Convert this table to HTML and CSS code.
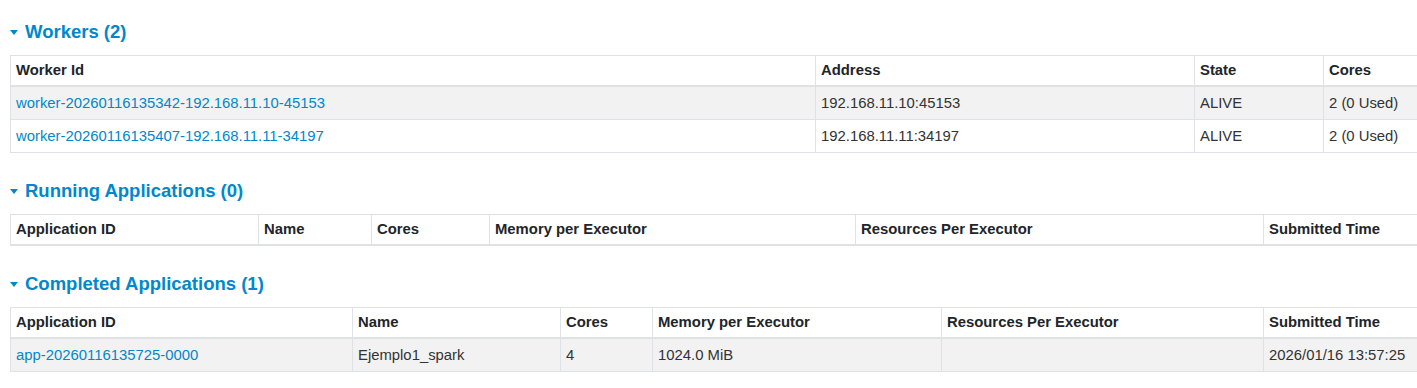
FILE: index.html
```html
<!DOCTYPE html>
<html lang="en">
<head>
  <meta charset="utf-8">
  <title>Spark Master</title>
  <link rel="stylesheet" href="styles.css">
</head>
<body>
  <div class="page">
    <section class="block">
      <h4 class="block__title"><span class="arrow-open"></span>Workers (2)</h4>
      <table class="data-table">
        <colgroup>
          <col style="width: 805px"><col style="width: 379px"><col style="width: 129px"><col>
        </colgroup>
        <thead>
          <tr><th>Worker Id</th><th>Address</th><th>State</th><th>Cores</th></tr>
        </thead>
        <tbody>
          <tr>
            <td><a href="#">worker-20260116135342-192.168.11.10-45153</a></td>
            <td>192.168.11.10:45153</td>
            <td>ALIVE</td>
            <td>2 (0 Used)</td>
          </tr>
          <tr>
            <td><a href="#">worker-20260116135407-192.168.11.11-34197</a></td>
            <td>192.168.11.11:34197</td>
            <td>ALIVE</td>
            <td>2 (0 Used)</td>
          </tr>
        </tbody>
      </table>
    </section>

    <section class="block">
      <h4 class="block__title"><span class="arrow-open"></span>Running Applications (0)</h4>
      <table class="data-table">
        <colgroup>
          <col style="width: 248px"><col style="width: 113px"><col style="width: 118px"><col style="width: 366px"><col style="width: 408px"><col>
        </colgroup>
        <thead>
          <tr><th>Application ID</th><th>Name</th><th>Cores</th><th>Memory per Executor</th><th>Resources Per Executor</th><th>Submitted Time</th></tr>
        </thead>
        <tbody></tbody>
      </table>
    </section>

    <section class="block">
      <h4 class="block__title"><span class="arrow-open"></span>Completed Applications (1)</h4>
      <table class="data-table">
        <colgroup>
          <col style="width: 342px"><col style="width: 208px"><col style="width: 92px"><col style="width: 289px"><col style="width: 322px"><col>
        </colgroup>
        <thead>
          <tr><th>Application ID</th><th>Name</th><th>Cores</th><th>Memory per Executor</th><th>Resources Per Executor</th><th>Submitted Time</th></tr>
        </thead>
        <tbody>
          <tr>
            <td><a href="#">app-20260116135725-0000</a></td>
            <td>Ejemplo1_spark</td>
            <td>4</td>
            <td>1024.0 MiB</td>
            <td></td>
            <td>2026/01/16 13:57:25</td>
          </tr>
        </tbody>
      </table>
    </section>
  </div>
</body>
</html>
```

FILE: styles.css
```css
*,
*::before,
*::after {
  box-sizing: border-box;
}

html,
body {
  margin: 0;
  padding: 0;
  overflow: hidden;
}

body {
  color: #333333;
  font-family: "Liberation Sans", Arial, sans-serif;
  font-size: 14.85px;
  line-height: 20px;
  background-color: #FFFFFF;
}

.page {
  padding: 20px 0 0 10px;
}

.block {
  margin-bottom: 26px;
}

.block__title {
  display: flex;
  align-items: center;
  margin: 0 0 11px;
  color: #0088cc;
  font-size: 18.5px;
  font-weight: 700;
  line-height: 24px;
}

.arrow-open {
  display: inline-block;
  width: 0;
  height: 0;
  margin: 1px 7px 0 0;
  border-top: 5px solid #0088cc;
  border-left: 4.5px solid transparent;
  border-right: 4.5px solid transparent;
}

.data-table {
  width: 1450px;
  table-layout: fixed;
  border-collapse: separate;
  border-spacing: 0;
  border-top: 1px solid #dee2e6;
}

.data-table th,
.data-table td {
  padding: 6px 5px;
  text-align: left;
  white-space: nowrap;
  overflow: hidden;
  border-left: 1px solid #dee2e6;
  line-height: 20px;
}

.data-table th {
  padding: 4px 5px 5px;
  color: #212529;
  font-weight: 700;
  border-bottom: 2px solid #dee2e6;
}

.data-table td {
  border-bottom: 1px solid #dee2e6;
}

.data-table tbody tr:nth-child(odd) td {
  background-color: #f2f2f2;
}

.data-table a {
  color: #0088cc;
  text-decoration: none;
}
```
